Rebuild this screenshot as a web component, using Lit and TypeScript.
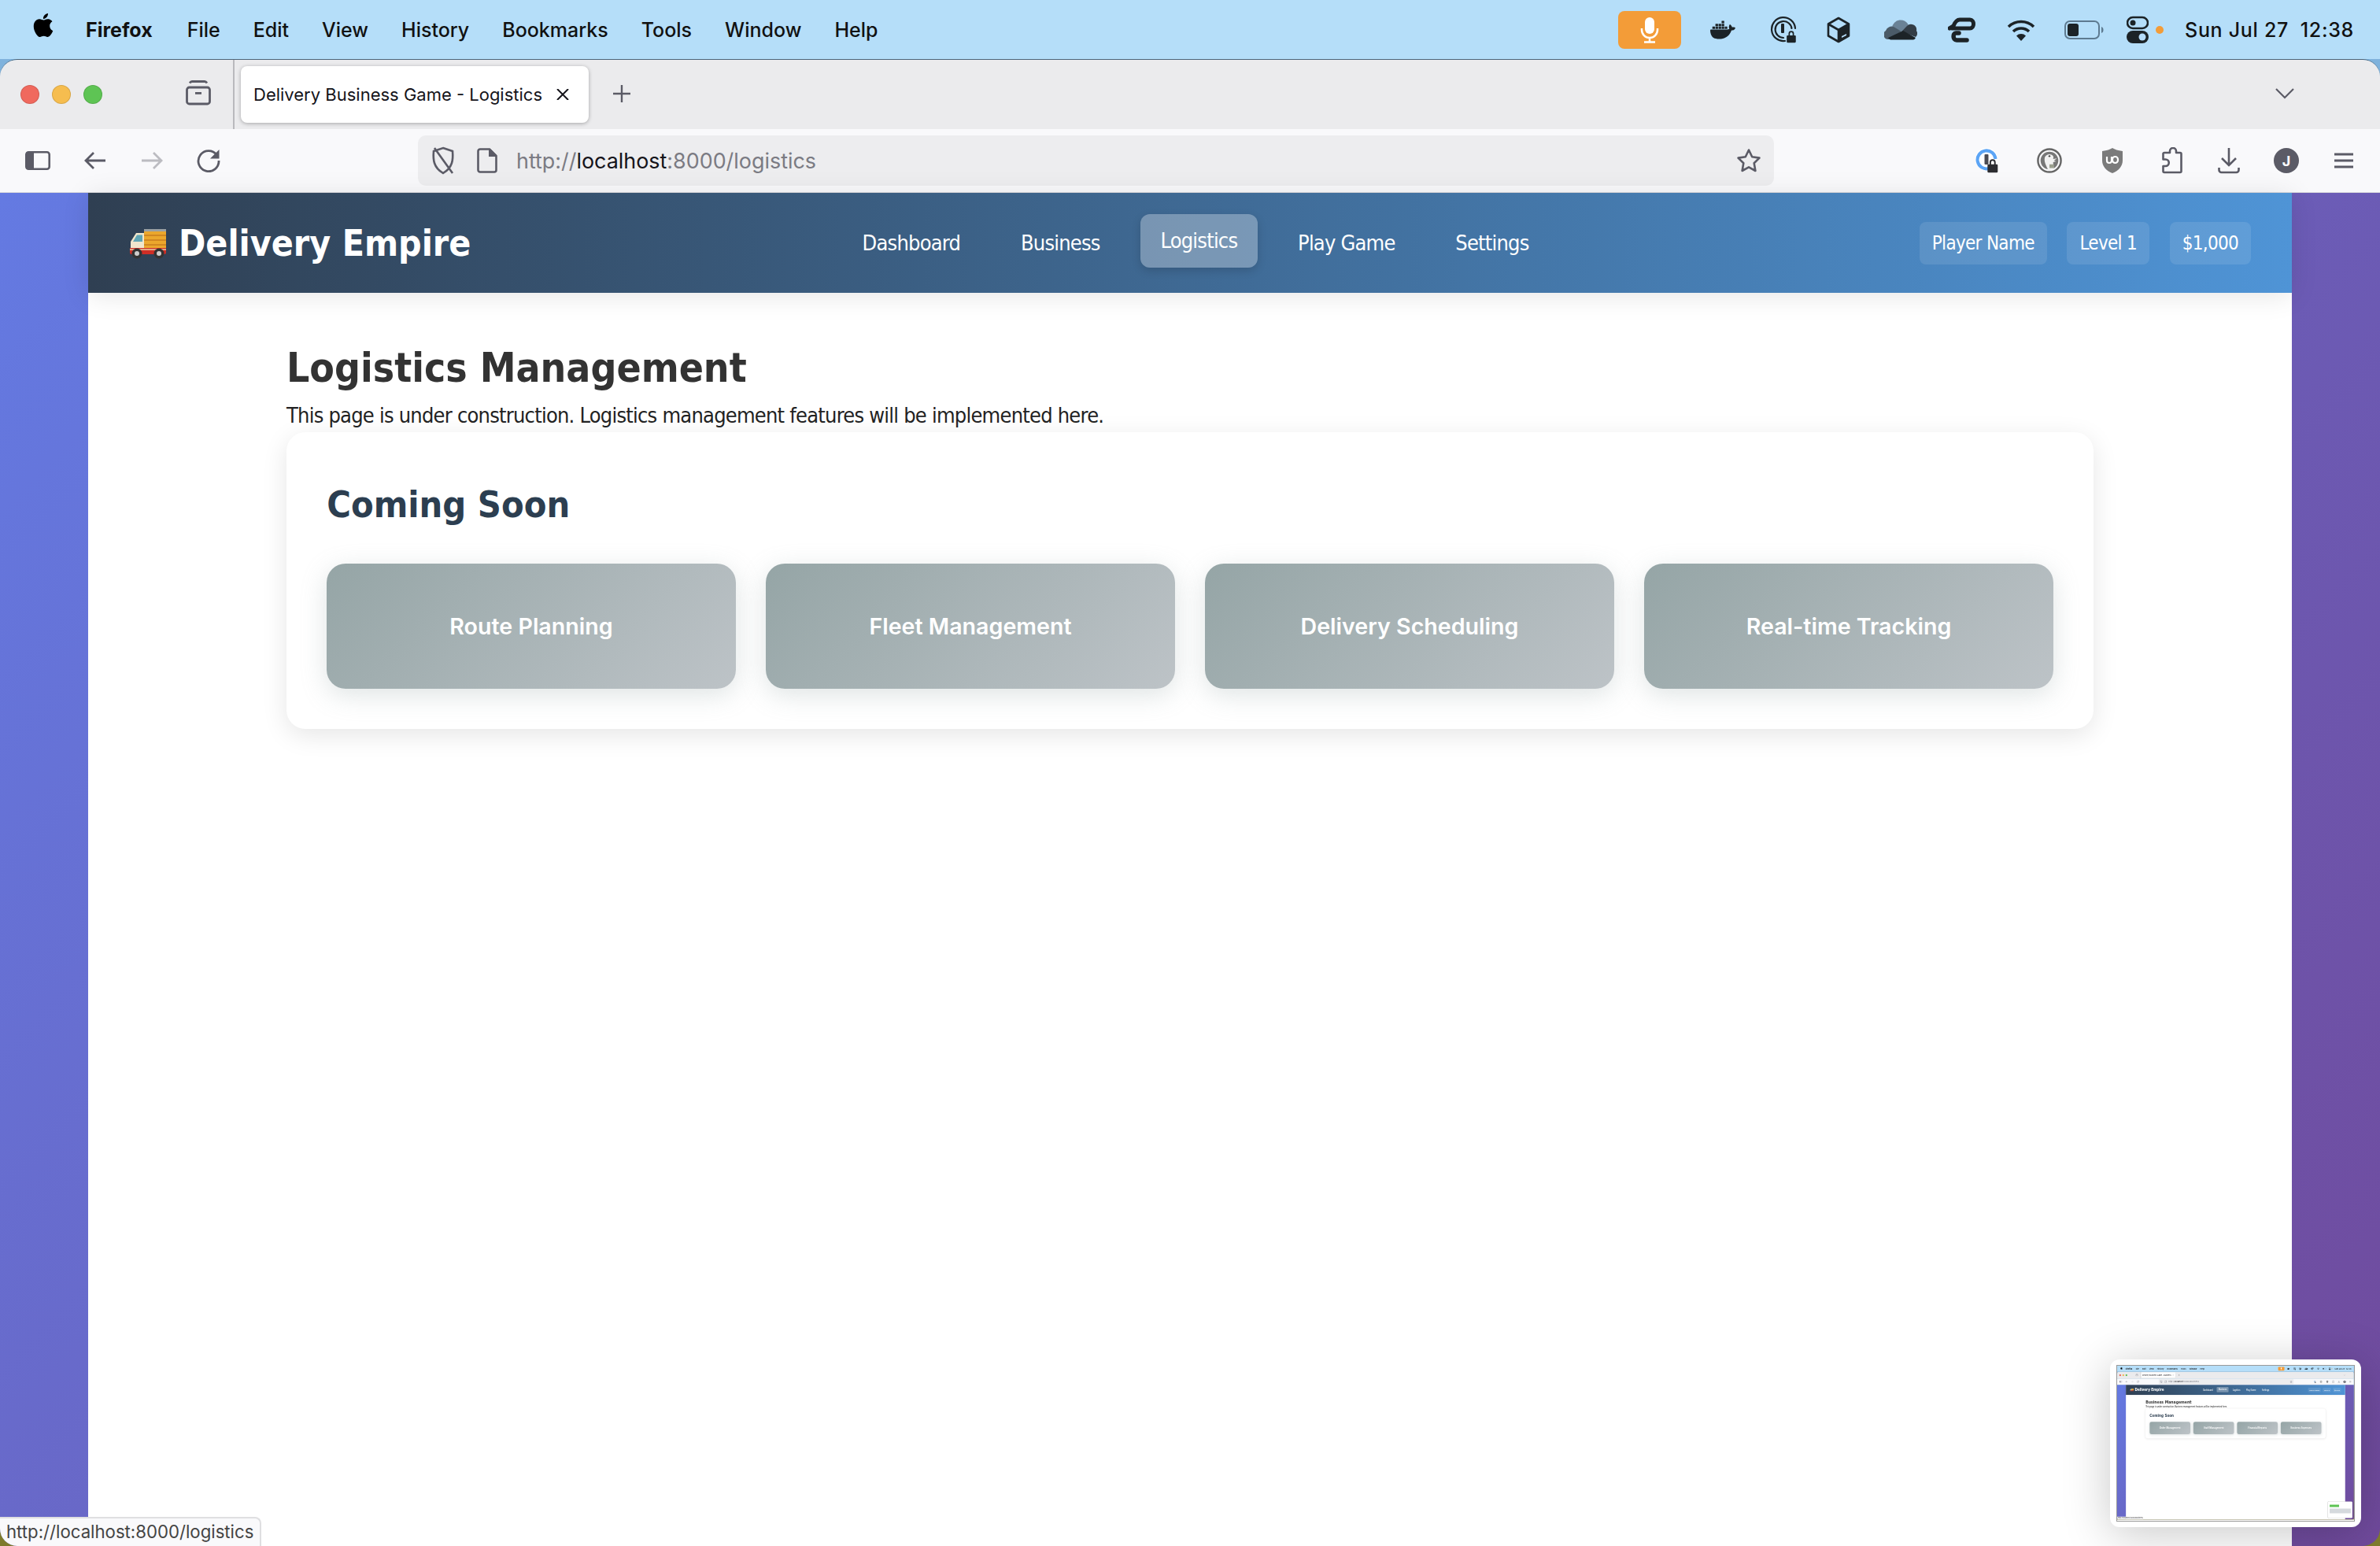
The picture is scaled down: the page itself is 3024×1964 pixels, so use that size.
import { LitElement, html, css, svg } from "lit";
import { customElement, property } from "lit/decorators.js";

const ic = (w: number, h: number, vb: string, body: unknown, cls = "") =>
  html`<svg class=${cls} width=${w} height=${h} viewBox=${vb} xmlns="http://www.w3.org/2000/svg">${body}</svg>`;

const apple = ic(30, 34, "0 0 24 24", svg`<path fill="#000" d="M12.152 6.896c-.948 0-2.415-1.078-3.96-1.04-2.04.027-3.91 1.183-4.961 3.014-2.117 3.675-.546 9.103 1.519 12.09 1.013 1.454 2.208 3.09 3.792 3.039 1.52-.065 2.09-.987 3.935-.987 1.831 0 2.35.987 3.96.948 1.637-.026 2.676-1.48 3.676-2.948 1.156-1.688 1.636-3.325 1.662-3.415-.039-.013-3.182-1.221-3.22-4.857-.026-3.04 2.48-4.494 2.597-4.559-1.429-2.09-3.623-2.324-4.39-2.376-2-.156-3.675 1.09-4.61 1.09zM15.53 3.83c.843-1.012 1.4-2.427 1.245-3.83-1.207.052-2.662.805-3.532 1.818-.78.896-1.454 2.338-1.273 3.714 1.338.104 2.715-.688 3.559-1.701"/>`);
const mic = ic(24, 34, "0 0 24 34", svg`<rect x="6" y="1" width="12" height="21" rx="6" fill="#fff"/><path d="M2 15v2a10 10 0 0 0 20 0v-2M12 27v5M5 32.500h14" fill="none" stroke="#fff" stroke-width="2.500"/>`);
const docker = ic(38, 32, "0 0 24 24", svg`<path fill="#1c2327" d="M13.983 11.078h2.119a.186.186 0 00.186-.185V9.006a.186.186 0 00-.186-.186h-2.119a.185.185 0 00-.185.185v1.888c0 .102.083.185.185.185m-2.954-5.43h2.118a.186.186 0 00.186-.186V3.574a.186.186 0 00-.186-.185h-2.118a.185.185 0 00-.185.185v1.888c0 .102.082.185.185.186m0 2.716h2.118a.187.187 0 00.186-.186V6.29a.186.186 0 00-.186-.185h-2.118a.185.185 0 00-.185.185v1.887c0 .102.082.185.185.186m-2.93 0h2.12a.186.186 0 00.184-.186V6.29a.185.185 0 00-.185-.185H8.1a.185.185 0 00-.185.185v1.887c0 .102.083.185.185.186m-2.964 0h2.119a.186.186 0 00.185-.186V6.29a.185.185 0 00-.185-.185H5.136a.186.186 0 00-.186.185v1.887c0 .102.084.185.186.186m5.893 2.715h2.118a.186.186 0 00.186-.185V9.006a.186.186 0 00-.186-.186h-2.118a.185.185 0 00-.185.185v1.888c0 .102.082.185.185.185m-2.93 0h2.12a.185.185 0 00.184-.185V9.006a.185.185 0 00-.184-.186h-2.12a.185.185 0 00-.184.185v1.888c0 .102.083.185.185.185m-2.964 0h2.119a.185.185 0 00.185-.185V9.006a.185.185 0 00-.184-.186h-2.12a.186.186 0 00-.186.186v1.887c0 .102.084.185.186.185m-2.92 0h2.12a.185.185 0 00.184-.185V9.006a.185.185 0 00-.184-.186h-2.12a.185.185 0 00-.184.185v1.888c0 .102.082.185.185.185M23.763 9.89c-.065-.051-.672-.51-1.954-.51-.338.001-.676.03-1.01.087-.248-1.7-1.653-2.53-1.716-2.566l-.344-.199-.226.327c-.284.438-.49.922-.612 1.43-.23.97-.09 1.882.403 2.661-.595.332-1.55.413-1.744.42H.751a.751.751 0 00-.75.748 11.376 11.376 0 00.692 4.062c.545 1.428 1.355 2.48 2.41 3.124 1.18.723 3.1 1.137 5.275 1.137.983.003 1.963-.086 2.93-.266a12.248 12.248 0 003.823-1.389c.98-.567 1.86-1.288 2.61-2.136 1.252-1.418 1.998-2.997 2.553-4.4h.221c1.372 0 2.215-.549 2.68-1.009.309-.293.55-.65.707-1.046l.098-.288Z"/>`);
const lock = (x: number, y: number, s: number, fill: string) => svg`<path transform="translate(${x} ${y}) scale(${s})" d="M3 6V4a3 3 0 0 1 6 0v2h1a1 1 0 0 1 1 1v6a1 1 0 0 1-1 1H2a1 1 0 0 1-1-1V7a1 1 0 0 1 1-1zm1.500 0h3V4a1.500 1.500 0 0 0-3 0z" fill=${fill}/>`;
const onePass = ic(34, 34, "0 0 34 34", svg`<g fill="none" stroke="#1c2327" stroke-width="2.200" stroke-linecap="round"><path d="M19 31A15 15 0 1 1 32 15"/><path d="M17 27A10.500 10.500 0 1 1 27.500 15"/></g><rect x="14" y="9" width="4" height="12" rx="1" fill="#1c2327"/>${lock(20, 17, 1.16, "#1c2327")}`);
const box = ic(30, 34, "0 0 30 34", svg`<path d="M15 2 28 9.500v15L15 32 2 24.500v-15zM2 9.500 15 17l13-7.500M15 17v15" fill="none" stroke="#1c2327" stroke-width="2.600" stroke-linejoin="round"/><path d="M15 17 28 9.500v15L15 32z" fill="#1c2327"/><path d="M19 25l6-3v2l-6 3z" fill="#b5dcf9"/>`);
const cloud = ic(42, 30, "0 0 42 30", svg`<path d="M10 12a11 11 0 0 1 21-3l-9 8z" fill="#6a8296"/><path d="M6 27A6 6 0 0 1 2 16a8 8 0 0 1 10-5l10 6-14 9z" fill="#4b5b68"/><path d="M22 17l7-7a7 7 0 0 1 12 6 6 6 0 0 1-1 8z" fill="#333d46"/><path d="M5 25 24 16l16 9a4 4 0 0 1-3 2.500H8a5 5 0 0 1-3-2.500z" fill="#1c2327"/>`);
const ep = ic(36, 32, "0 0 36 32", svg`<path d="M5 14h23c6 0 6-11 0-11H15c-4 0-6 3-8 8l-5 3" fill="none" stroke="#1c2327" stroke-width="5" stroke-linecap="round" stroke-linejoin="round"/><path d="M14 20H10c-4 0-4 9 1 9h13" fill="none" stroke="#1c2327" stroke-width="5.500" stroke-linecap="round"/>`);
const wifi = ic(36, 28, "0 0 36 28", svg`<g fill="none" stroke="#1c2327" stroke-width="3.600"><path d="M2 10a23 23 0 0 1 32 0"/><path d="M8 16a14.500 14.500 0 0 1 20 0"/></g><path d="M18 28l-6-6.500a8.500 8.500 0 0 1 12 0z" fill="#1c2327"/>`);
const battery = ic(50, 24, "0 0 50 24", svg`<rect x="1" y="1" width="43" height="22" rx="6" fill="none" stroke="#5d7a90" stroke-width="2"/><rect x="4" y="4" width="14" height="16" rx="3" fill="#1c2327"/><path d="M47 8c2 1 2.500 2 2.500 4s-.5 3-2.500 4z" fill="#5d7a90"/>`);
const control = ic(28, 36, "0 0 28 36", svg`<rect x="1" y="2" width="26" height="14" rx="7" fill="none" stroke="#1c2327" stroke-width="2.600"/><circle cx="8" cy="9" r="3.500" fill="#1c2327"/><rect x="0" y="19" width="28" height="16" rx="8" fill="#1c2327"/><circle cx="20" cy="27" r="4.500" fill="#b5dcf9"/>`);
const vault = ic(32, 32, "0 0 32 32", svg`<g fill="none" stroke="#5b5b66" stroke-width="2.800"><rect x="1.500" y="9" width="29" height="21" rx="3"/><path d="M5 3.500c1-1.500 2-2 3-2h16c1 0 2 .5 3 2"/></g><rect x="12" y="15" width="8" height="2.800" fill="#5b5b66"/>`);
const sidebar = ic(32, 24, "0 0 32 24", svg`<rect x="1.300" y="1.300" width="29.400" height="21.400" rx="3" fill="none" stroke="#5b5b66" stroke-width="2.600"/><path d="M3 1h8v22H3a2 2 0 0 1-2-2V3a2 2 0 0 1 2-2z" fill="#5b5b66"/>`);
const arrow = (c: string, flip: boolean) => ic(30, 24, "0 0 30 24", svg`<path transform=${flip ? "matrix(-1 0 0 1 30 0)" : ""} d="M28 12H3M13 2 3 12l10 10" fill="none" stroke=${c} stroke-width="2.800"/>`);
const reload = ic(30, 30, "0 0 30 30", svg`<path d="M25.500 8A13 13 0 1 0 28 15" fill="none" stroke="#5b5b66" stroke-width="2.800"/><path d="M28.500 1v11.500H17z" fill="#5b5b66"/>`);
const shield = ic(30, 36, "0 0 30 36", svg`<path d="M15 2 27 6c1 11 0 21-12 28C3 27 2 17 3 6zM4 2l23 32" fill="none" stroke="#5b5b66" stroke-width="2.600"/>`);
const pageIc = ic(26, 32, "0 0 26 32", svg`<path d="M4 1.500h12L24.500 10v18a2.500 2.500 0 0 1-2.500 2.500H4A2.500 2.500 0 0 1 1.500 28V4A2.500 2.500 0 0 1 4 1.500z" fill="none" stroke="#5b5b66" stroke-width="2.600"/><path d="M15 1h2l8 8v2H15z" fill="#5b5b66"/>`);
const star = ic(32, 32, "0 0 32 32", svg`<path d="m16 2.500 4.200 8.800 9.300 1.300-6.800 6.700 1.700 9.700L16 24.400 7.600 29l1.700-9.700-6.800-6.700 9.300-1.300z" fill="none" stroke="#5b5b66" stroke-width="2.600" stroke-linejoin="round"/>`);
const onePassBlue = ic(30, 32, "0 0 30 32", svg`<circle cx="14" cy="14" r="14" fill="#fff"/><path d="M17 26A11.500 11.500 0 1 1 25.500 14" fill="none" stroke="#5ba4f5" stroke-width="4"/><rect x="11.500" y="8" width="5" height="13" rx="1" fill="#4a4a52"/>${lock(14, 13, 1.3, "#2c2c30")}`);
const ddg = ic(32, 34, "0 0 34 34", svg`<circle cx="17" cy="17" r="15.500" fill="none" stroke="#666" stroke-width="2.600"/><circle cx="17" cy="17" r="12" fill="#777"/><path d="M15 29c-3-6-6-12-4-17 2-4 8-5 11-1 1 2 0 3 0 4l5-1-4 3 3 1-4 1c0 3 1 6 1 9-3 2-6 2-8 1z" fill="#f1f1f1"/><circle cx="17" cy="11" r="1.300" fill="#444"/><path d="M17 22h6v5h-6z" fill="#9a9f8e"/>`);
const ubo = ic(28, 34, "0 0 28 34", svg`<path d="M14 1c3 2 7 3 13 4v12c0 7-5 13-13 16C6 30 1 24 1 17V5c6-1 10-2 13-4z" fill="#7b7b7b"/><g fill="none" stroke="#fff" stroke-width="2.200"><path d="M7 12v5a3 3 0 0 0 6 0v-5"/><rect x="14" y="12" width="7" height="8" rx="3.500"/></g>`);
const puzzle = ic(26, 34, "0 0 26 34", svg`<path d="M10 6V5a4 4 0 0 1 8 0v2h5a1.500 1.500 0 0 1 1.500 1.500v22a1.500 1.500 0 0 1-1.500 1.500H3a1.500 1.500 0 0 1-1.500-1.500V24h3a4 4 0 0 0 0-8.500h-3V8A1.500 1.500 0 0 1 3 7h7z" fill="none" stroke="#5b5b66" stroke-width="2.600" stroke-linejoin="round"/>`);
const download = ic(28, 34, "0 0 28 34", svg`<path d="M14 1v22M5 14l9 9 9-9M1.500 26v3a3 3 0 0 0 3 3h19a3 3 0 0 0 3-3v-3" fill="none" stroke="#5b5b66" stroke-width="2.600"/>`);
const burger = ic(26, 22, "0 0 26 22", svg`<path d="M1 3h24M1 11h24M1 19h24" stroke="#5b5b66" stroke-width="2.800"/>`);
const closeX = ic(16, 14, "0 0 16 14", svg`<path d="m1 0 14 14M15 0 1 14" stroke="#15141a" stroke-width="2"/>`);
const plus = ic(24, 24, "0 0 24 24", svg`<path d="M12 1v22M1 12h22" stroke="#5b5b66" stroke-width="2.400"/>`);
const chevron = ic(26, 14, "0 0 26 14", svg`<path d="m2 1 11 11L24 1" fill="none" stroke="#5b5b66" stroke-width="2.200"/>`);
const truck = ic(48, 40, "0 0 48 40", svg`
  <rect x="19" y="2" width="28" height="26" fill="#eba72c"/>
  <rect x="19" y="2" width="28" height="3" fill="#9aa0a3"/>
  <path d="M19 10h28M19 16h28M19 22h28" stroke="#c97d1e" stroke-width="1.600"/>
  <path d="M19 7H9L2 18v9h17z" fill="#f0e6cc"/>
  <path d="M17 9.500H10L5 18h12z" fill="#5fa5b4"/>
  <path d="M1 26h46v6a2 2 0 0 1-2 2H3a2 2 0 0 1-2-2z" fill="#cf2e26"/>
  <path d="M1 28h46" stroke="#e9cfa6" stroke-width="1.500"/>
  <g><circle cx="10" cy="33" r="6.500" fill="#333"/><circle cx="10" cy="33" r="3" fill="#ccc"/><circle cx="38" cy="33" r="6.500" fill="#333"/><circle cx="38" cy="33" r="3" fill="#ccc"/></g>`);

const MENUS = ["File", "Edit", "View", "History", "Bookmarks", "Tools", "Window", "Help"];
const NAV = ["Dashboard", "Business", "Logistics", "Play Game", "Settings"];

@customElement("browser-window")
export class BrowserWindow extends LitElement {
  @property() active = "Logistics";
  @property() path = "logistics";
  @property() heading = "Logistics Management";
  @property() copy = "Logistics";
  @property({ type: Array }) cards: string[] = [];
  @property({ type: Boolean }) nested = false;

  static styles = css`
    :host {
      display: flex;
      flex-direction: column;
      width: 3024px;
      height: 1964px;
      overflow: hidden;
      position: relative;
      background: linear-gradient(#7fb2dc 0, #7fb2dc 140px, #7d7a2c 1900px);
      --ui: Inter, "Liberation Sans", sans-serif;
      --page: "DejaVu Sans", sans-serif;
    }
    .menubar {
      flex: none;
      height: 75px;
      background: #b5def9;
      display: flex;
      align-items: center;
      font: 500 25px var(--ui);
      color: #111;
    }
    .apple { margin: -6px 0 0 40px; }
    .app { font-weight: 700; margin-left: 39px; }
    .menus { display: flex; margin-left: 44px; }
    .menus span { margin-right: 42px; }
    .status { margin-left: auto; display: flex; align-items: center; margin-right: 33px; }
    .status svg { display: block; flex: none; }
    .mic {
      width: 80px;
      height: 48px;
      background: #f39c38;
      border-radius: 8px;
      display: flex;
      align-items: center;
      justify-content: center;
      margin-right: 34px;
    }
    .s1 { margin-right: 41px; } .s2 { margin-right: 38px; } .s3 { margin-right: 43px; }
    .s4 { margin-right: 39px; } .s5 { margin-right: 39px; } .s6 { margin-right: 37px; }
    .s7 { margin-right: 29px; } .s8 { margin-right: 9px; }
    .dot { width: 10px; height: 10px; border-radius: 50%; background: #f39c38; margin-right: 27px; }
    .clock { white-space: pre; font-weight: 500; letter-spacing: .7px; }
    .window {
      flex: 1;
      min-height: 0;
      display: flex;
      flex-direction: column;
      border-radius: 22px;
      overflow: hidden;
      border-top: 1px solid #4b6478;
    }
    .tabs {
      flex: none;
      height: 88px;
      background: #ebebed;
      display: flex;
      align-items: center;
      position: relative;
    }
    .light { width: 24px; height: 24px; border-radius: 50%; margin-right: 16px; box-sizing: border-box; border: 1px solid rgba(0,0,0,.12); }
    .light:first-child { margin-left: 26px; }
    .red { background: #f0695e; } .yellow { background: #f6bd4f; } .green { background: #5ec454; }
    .vault { margin-left: 90px; display: block; }
    .divider { width: 2px; height: 88px; background: #b9b9bd; margin-left: 28px; }
    .tab {
      width: 442px;
      height: 72px;
      box-sizing: border-box;
      margin-left: 8px;
      padding: 0 25px 0 16px;
      background: #fff;
      border-radius: 8px;
      box-shadow: 0 1px 5px rgba(0,0,0,.3);
      display: flex;
      align-items: center;
      justify-content: space-between;
      font: 400 22px var(--ui);
      color: #15141a;
      white-space: nowrap;
    }
    .plus { margin-left: 30px; display: block; transform: translateY(1px); }
    .chev { margin-left: auto; margin-right: 108px; display: block; transform: translateY(1px); }
    .toolbar {
      flex: none;
      height: 81px;
      background: #f9f9fb;
      border-bottom: 1px solid #d9d9dd;
      box-sizing: border-box;
      display: flex;
      align-items: center;
    }
    .toolbar svg { display: block; flex: none; }
    .tb1 { margin-left: 32px; }
    .tb2 { margin-left: 42px; }
    .urlbar {
      width: 1723px;
      height: 64px;
      background: #ededef;
      border-radius: 10px;
      display: flex;
      align-items: center;
      box-sizing: border-box;
      padding: 0 16px 0 17px;
      font: 400 26.900px var(--ui);
      color: #7b7b83;
      flex: none;
    }
    .urlspacer { width: 251px; flex: none; }
    .url { margin-left: 24px; white-space: nowrap; }
    .url b { font-weight: 400; color: #15141a; }
    .pg { margin-left: 28px; }
    .star { margin-left: auto; }
    .ext { display: flex; align-items: center; margin-left: 256px; }
    .e1 { margin-right: 48px; } .e2 { margin-right: 50px; } .e3 { margin-right: 49px; }
    .e4 { margin-right: 45px; } .e5 { margin-right: 43px; } .e6 { margin-right: 44px; }
    .avatar {
      width: 32px;
      height: 32px;
      border-radius: 50%;
      background: #5b5b66;
      color: #fff;
      font: 700 18px var(--ui);
      display: flex;
      align-items: center;
      justify-content: center;
    }
    .page {
      flex: 1;
      min-height: 0;
      position: relative;
      background: linear-gradient(135deg, #647ae2 0%, #704a9c 100%);
      padding: 0 112px;
      font-family: var(--page);
      font-stretch: condensed;
    }
    .sheet { background: #fff; height: 100%; }
    header {
      height: 127px;
      box-sizing: border-box;
      padding: 0 52px;
      display: flex;
      align-items: center;
      background: linear-gradient(90deg, #2f3f52 0%, #4f94d6 100%);
      box-shadow: 0 4px 32px rgba(0,0,0,.1);
      color: #fff;
      position: relative;
    }
    .brand { display: flex; align-items: center; width: 906px; flex: none; font-weight: 700; font-size: 46px; white-space: nowrap; gap: 15px; }
    nav { display: flex; gap: 25.600px; font-size: 27px; letter-spacing: -.8px; }
    nav span { padding: 20px 25.600px; border-radius: 12px; line-height: 28px; white-space: nowrap; }
    nav .on { background: rgba(255,255,255,.3); box-shadow: 0 4px 12px rgba(0,0,0,.15); transform: translateY(-3px); }
    .player { margin-left: auto; display: flex; gap: 25.600px; font-size: 24px; letter-spacing: -.7px; }
    .player span { background: rgba(255,255,255,.1); padding: 0 16px; height: 54px; line-height: 54px; border-radius: 8px; white-space: nowrap; }
    main { width: 2296px; margin: 0 auto; padding-top: 60px; }
    h2 { margin: 0; font-size: 51.200px; line-height: 70px; font-weight: 700; color: #333; }
    .lead { margin: 0; font-size: 27px; letter-spacing: -.78px; line-height: 40px; color: #222; height: 47px; padding-top: 6px; box-sizing: border-box; }
    .card {
      background: #fff;
      border-radius: 24px;
      padding: 51.200px;
      box-shadow: 0 8px 32px rgba(0,0,0,.1);
    }
    h3 { margin: 5px 0 39px; font-size: 46.500px; line-height: 72px; font-weight: 700; color: #2c3e50; }
    .grid { display: grid; grid-template-columns: repeat(4, 1fr); gap: 38.400px; }
    .item {
      height: 159px;
      border-radius: 24px;
      background: linear-gradient(135deg, #95a5a6, #bdc3c7);
      box-shadow: 0 8px 32px rgba(149,165,166,.3);
      color: #fff;
      font: 600 28.600px var(--ui);
      display: flex;
      align-items: center;
      justify-content: center;
    }
    .hover-link {
      position: absolute;
      left: 0;
      bottom: 0;
      width: 332px;
      height: 37px;
      box-sizing: border-box;
      background: #f9f9fb;
      border: 2px solid #dfdfe1;
      border-left: 0;
      border-bottom: 0;
      border-radius: 0 8px 0 0;
      padding-left: 8px;
      font: 400 22.200px/34px var(--ui);
      color: #444;
      white-space: nowrap;
    }
    .thumb {
      position: absolute;
      right: 24px;
      bottom: 24px;
      width: 319px;
      height: 213px;
      box-sizing: border-box;
      padding: 8px 9px;
      background: #fff;
      border-radius: 12px;
      box-shadow: 0 8px 60px rgba(0,0,0,.22);
    }
    .shot { width: 301px; height: 197px; overflow: hidden; box-shadow: 0 0 0 1px #999; filter: blur(.4px); }
    .shot browser-window { transform: scale(.0995); transform-origin: 0 0; }
    .mini { position: absolute; right: 20px; bottom: 20px; width: 310px; height: 210px; background: #fff; box-shadow: 0 0 0 6px rgba(0,0,0,.2); border-radius: 12px; }
    .mini i { display: block; margin: 40px 20px 0; height: 30px; width: 120px; background: #5ec454; }
    .mini u { display: block; margin: 20px; height: 60px; background: #d5d9dd; }
  `;

  render() {
    const { active, path, heading, copy, cards, nested } = this;
    return html`
      <div class="menubar">
        <span class="apple">${apple}</span>
        <span class="app">Firefox</span>
        <div class="menus">${MENUS.map((m) => html`<span>${m}</span>`)}</div>
        <div class="status">
          <div class="mic">${mic}</div>
          <span class="s1">${docker}</span>
          <span class="s2">${onePass}</span>
          <span class="s3">${box}</span>
          <span class="s4">${cloud}</span>
          <span class="s5">${ep}</span>
          <span class="s6">${wifi}</span>
          <span class="s7">${battery}</span>
          <span class="s8">${control}</span>
          <span class="dot"></span>
          <span class="clock">Sun Jul 27  12:38</span>
        </div>
      </div>
      <div class="window">
        <div class="tabs">
          <span class="light red"></span><span class="light yellow"></span><span class="light green"></span>
          <span class="vault">${vault}</span>
          <span class="divider"></span>
          <div class="tab"><span>Delivery Business Game - ${copy}</span>${closeX}</div>
          <span class="plus">${plus}</span>
          <span class="chev">${chevron}</span>
        </div>
        <div class="toolbar">
          <span class="tb1">${sidebar}</span>
          <span class="tb2">${arrow("#5b5b66", false)}</span>
          <span class="tb2">${arrow("#bcbcc1", true)}</span>
          <span class="tb2">${reload}</span>
          <span class="urlspacer"></span>
          <div class="urlbar">
            ${shield}<span class="pg">${pageIc}</span>
            <span class="url">http://<b>localhost</b>:8000/${path}</span>
            <span class="star">${star}</span>
          </div>
          <div class="ext">
            <span class="e1">${onePassBlue}</span>
            <span class="e2">${ddg}</span>
            <span class="e3">${ubo}</span>
            <span class="e4">${puzzle}</span>
            <span class="e5">${download}</span>
            <span class="avatar e6">J</span>
            ${burger}
          </div>
        </div>
        <div class="page">
          <div class="sheet">
            <header>
              <div class="brand">${truck}<span>Delivery Empire</span></div>
              <nav>${NAV.map((n) => html`<span class=${n === active ? "on" : ""}>${n}</span>`)}</nav>
              <div class="player"><span>Player Name</span><span>Level 1</span><span>$1,000</span></div>
            </header>
            <main>
              <h2>${heading}</h2>
              <p class="lead">This page is under construction. ${copy} management features will be implemented here.</p>
              <section class="card">
                <h3>Coming Soon</h3>
                <div class="grid">${cards.map((c) => html`<div class="item">${c}</div>`)}</div>
              </section>
            </main>
          </div>
          <div class="hover-link">http://localhost:8000/${path}</div>
          ${nested
            ? html`<div class="mini"><i></i><u></u></div>`
            : html`<div class="thumb"><div class="shot">
                <browser-window nested active="Business" path="business" heading="Business Management" copy="Business"
                  .cards=${["Order Management", "Staff Management", "Financial Reports", "Business Expenses"]}></browser-window>
              </div></div>`}
        </div>
      </div>
    `;
  }
}

@customElement("app-root")
export class AppRoot extends LitElement {
  static styles = css`
    :host { display: block; width: 3024px; height: 1964px; }
  `;
  render() {
    return html`<browser-window
      .cards=${["Route Planning", "Fleet Management", "Delivery Scheduling", "Real-time Tracking"]}></browser-window>`;
  }
}
